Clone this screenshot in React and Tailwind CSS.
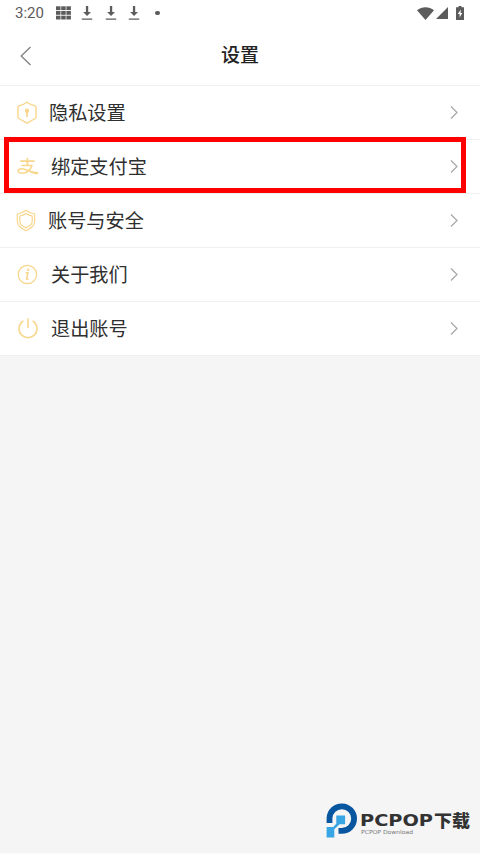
import React from "react";

const gold = "#f8d68c";

const PrivacyIcon = () => (
  <svg width="22" height="24" viewBox="0 0 22 24" fill="none" stroke={gold} strokeWidth="1.400" strokeLinejoin="round">
    <path d="M11 1.200c2.500 1.800 5.200 3 8 3.600q1 .3 1 1.300v10q0 .9-.8 1.400L11 22.200 2.800 17.500Q2 17 2 16.100V6.100q0-1 1-1.300c2.800-.6 5.500-1.800 8-3.600z" />
    <circle cx="11" cy="9.800" r="2.200" fill={gold} stroke="none" />
    <path d="M11 10.500v5.500" strokeWidth="1.700" />
  </svg>
);

const AlipayIcon = () => (
  <svg width="22" height="24" viewBox="0 0 22 24" fill="none" stroke={gold} strokeWidth="1.700">
    <path d="M10.400 3v8M3.200 6.200h14.500M4.500 10.500h11" />
    <path d="M15 10.500c-1.200 4-5 7.700-9.600 7.700-2.800 0-4.300-1-4.300-2.300 0-1.300 1.600-2.300 4-2.200 2.500.1 5 1.200 7.400 2.400" strokeWidth="1.500" />
    <path d="M10.800 14.400c3.500 1.400 6.600 2.200 10.700 2.500l-1 2.600c-4-.5-7.200-1.800-10.600-3.800z" fill={gold} stroke="none" />
  </svg>
);

const ShieldIcon = () => (
  <svg width="22" height="24" viewBox="0 0 22 24" fill="none" stroke={gold} strokeLinejoin="round">
    <path d="M11 1.300c2.500 2 5.300 3.200 8.700 3.700v7c0 4.500-3.700 7.500-8.700 9.800-5-2.300-8.700-5.300-8.700-9.800V5c3.400-.5 6.200-1.700 8.700-3.700z" strokeWidth="1.200" />
    <path d="M11 4.400c1.900 1.400 3.900 2.200 6.200 2.600v5.300c0 3-2.600 5-6.200 6.600-3.600-1.600-6.200-3.600-6.200-6.600V7C7.100 6.600 9.100 5.800 11 4.400z" strokeWidth="1.200" />
  </svg>
);

const InfoIcon = () => (
  <svg width="22" height="24" viewBox="0 0 22 24" fill="none" stroke={gold} strokeWidth="1.300">
    <circle cx="11.400" cy="11.500" r="9.200" />
    <circle cx="12.200" cy="6.700" r="1.200" fill={gold} stroke="none" />
    <path d="M9.600 9.800h2.300l-1.400 6.200q0 .8 2-.3" strokeWidth="1.500" />
  </svg>
);

const PowerIcon = () => (
  <svg width="22" height="24" viewBox="0 0 22 24" fill="none" stroke={gold} strokeWidth="1.500" strokeLinecap="round">
    <path d="M11 1.800v8.700M6 4.200a9 9 0 1 0 10 0" />
  </svg>
);

const DownloadIcon = () => (
  <svg width="12" height="16" viewBox="0 0 12 16" fill="#5c5c5c">
    <path d="M4.900 1h2.300v6h2.800L6.050 11 2.100 7h2.800zM.8 13.500h10.400v1.300H.8z" />
  </svg>
);

const StatusBar = () => (
  <div className="flex h-[26px] items-center pl-[15px] pr-[16px] text-[#5c5c5c]">
    <span className="w-[41px] font-[Roboto] text-[15px] leading-[26px]">3:20</span>
    <svg width="15" height="14" viewBox="0 0 15 14" fill="#5c5c5c">
      {[0, 5.200, 10.400].map((x) =>
        [0.3, 5, 9.700].map((y) => <rect key={x + "-" + y} x={x} y={y} width="4.500" height="3.800" />)
      )}
    </svg>
    <div className="ml-[10px] flex gap-[11.5px]">
      <DownloadIcon />
      <DownloadIcon />
      <DownloadIcon />
    </div>
    <span className="ml-[15px] h-[4.5px] w-[4.5px] rounded-full bg-[#5c5c5c]"></span>
    <div className="ml-auto flex items-center">
      <svg width="17" height="13" viewBox="0 0 17 13" fill="#5c5c5c">
        <path d="M0 3.200C5-.9 12-.9 17 3.200L8.500 13z" />
      </svg>
      <svg className="ml-[2px]" width="12" height="12" viewBox="0 0 12 12" fill="#5c5c5c">
        <path d="M12 0v12H0z" />
      </svg>
      <svg className="ml-[8px]" width="8" height="14" viewBox="0 0 8 14">
        <path d="M2.500 0h3v1.300H8V14H0V1.300h2.500z" fill="#5c5c5c" />
        <path d="M4.800 3.500 1.800 8h1.800v3.400L6.300 7H4.600z" fill="#fff" />
      </svg>
    </div>
  </div>
);

const rows = [
  { text: "隐私设置", icon: <PrivacyIcon />, pad: "pl-[16px]", gap: "ml-[11px]" },
  { text: "绑定支付宝", icon: <AlipayIcon />, pad: "pl-[17px]", gap: "ml-[12px]" },
  { text: "账号与安全", icon: <ShieldIcon />, pad: "pl-[15px]", gap: "ml-[11px]" },
  { text: "关于我们", icon: <InfoIcon />, pad: "pl-[16px]", gap: "ml-[13px]" },
  { text: "退出账号", icon: <PowerIcon />, pad: "pl-[17px]", gap: "ml-[12px]" },
];

const Logo = () => (
  <svg width="146" height="38" viewBox="0 0 146 38">
    <path d="M3.500 21v-4.800a12.300 12.300 0 1 1 12.300 12.700h-3.300" fill="none" stroke="#07569f" strokeWidth="5.800" />
    <path d="M10.300 13.500h8.800v8.700h-5.500l-5.300 5v8.300H.6V25h6.600l3.100-3.300z" fill="#38a5e5" />
    <text x="34" y="24" textLength="73" lengthAdjust="spacingAndGlyphs" fontFamily="DejaVu Sans, sans-serif" fontWeight="700" fontSize="15.500" fill="#333">PCPOP</text>
    <text x="108" y="25" textLength="36" lengthAdjust="spacingAndGlyphs" fontFamily="Noto Sans CJK SC, sans-serif" fontWeight="900" fontSize="16.500" fill="#333">下载</text>
    <text x="35" y="31.500" textLength="52" lengthAdjust="spacingAndGlyphs" fontFamily="DejaVu Sans, sans-serif" fontSize="5.500" fill="#777">PCPOP Download</text>
  </svg>
);

const App = () => {
  return (
    <div className="relative flex h-[854px] w-[480px] flex-col overflow-hidden border-b border-[#fbfbfb] bg-[#f5f5f5] font-['Noto_Sans_CJK_SC',sans-serif]">
      <div className="h-[86px] border-b border-[#f0f0f0] bg-white">
        <StatusBar />
        <div className="grid h-[59px] grid-cols-[1fr_2fr_1fr] items-center">
          <svg className="ml-5" width="12" height="20" viewBox="0 0 12 20" fill="none" stroke="#808080" strokeWidth="1.300">
            <path d="M10.500 1 1.200 10l9.300 9" />
          </svg>
          <h1 className="pb-[3px] text-center text-[19px] font-medium leading-7 text-[#222]">设置</h1>
        </div>
      </div>

      <div>
        {rows.map((row) => (
          <div key={row.text} className={"flex h-[54px] items-center border-b border-[#f0f0f0] bg-white pr-[22px] " + row.pad}>
            {row.icon}
            <span className={"pb-[2px] text-[19.2px] leading-7 text-[#2f2f2f] " + row.gap}>{row.text}</span>
            <svg className="ml-auto" width="8" height="14" viewBox="0 0 8 14" fill="none" stroke="#a6a6a6" strokeWidth="1.200">
              <path d="m1 .5 6 6-6 6" />
            </svg>
          </div>
        ))}
      </div>

      {/* highlight around the alipay row */}
      <div className="absolute left-[4px] top-[137px] h-[56px] w-[462px] border-[5px] border-[#fe0000]"></div>

      <div className="mt-auto flex justify-end pb-[13px] pr-[8px]">
        <Logo />
      </div>
    </div>
  );
};

export default App;
